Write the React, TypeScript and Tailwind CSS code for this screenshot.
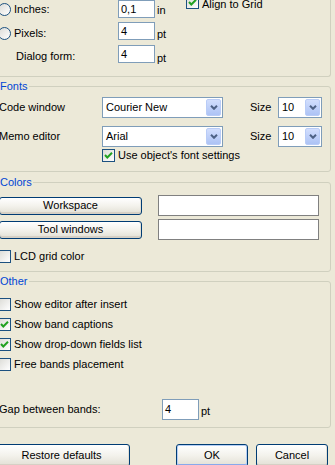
import type { ReactNode } from 'react';

function Check({ checked }: { checked?: boolean }) {
  return (
    <span className="flex h-[13px] w-[13px] shrink-0 items-center justify-center border border-[#1C5180] bg-linear-to-br from-[#DCDCD7] to-white">
      {checked && (
        <svg width="11" height="11" viewBox="0 0 11 11">
          <path d="M2 5 L4.3 7.5 L9 2.8" fill="none" stroke="#21A121" strokeWidth="2" />
        </svg>
      )}
    </span>
  );
}

function Radio() {
  return <span className="h-[13px] w-[13px] shrink-0 rounded-full border border-[#1C5180] bg-linear-to-br from-[#DCDCD7] to-white" />;
}

function Edit({ value, className }: { value: string; className: string }) {
  return (
    <div className={`flex h-[18px] shrink-0 items-center border border-[#7F9DB9] bg-white pl-[2px] leading-[14px] ${className}`}>
      {value}
    </div>
  );
}

function Combo({ value, className }: { value: string; className: string }) {
  return (
    <div className={`flex h-[21px] shrink-0 border border-[#7F9DB9] bg-white p-[1px] ${className}`}>
      <span className="flex-1 pl-[2px] leading-[17px]">{value}</span>
      <span className="flex w-[15px] items-center justify-center rounded-[2px] border border-[#B9CCF7] bg-linear-to-b from-[#D2DEFD] to-[#ADC3F5]">
        <svg width="8" height="5" viewBox="0 0 8 5">
          <path d="M1 0.8 L4 3.8 L7 0.8" fill="none" stroke="#4D6185" strokeWidth="2" />
        </svg>
      </span>
    </div>
  );
}

function Btn({ children, className, def }: { children: ReactNode; className: string; def?: boolean }) {
  return (
    <div
      className={`flex shrink-0 items-center justify-center rounded-[3px] border border-[#003C74] bg-linear-to-b from-white via-[#F3F2EC] to-[#E2DFD4] ${
        def
          ? 'shadow-[inset_0_0_0_1px_#B5CEF5,inset_0_-2px_0_#88A9EC]'
          : 'shadow-[inset_0_-2px_0_#D6D0C5,inset_-1px_0_0_#E3E0D5]'
      } ${className}`}
    >
      {children}
    </div>
  );
}

function Group({ title, className, children }: { title: string; className: string; children: ReactNode }) {
  return (
    <div className={`relative rounded-[3px] border border-[#D0D0BF] ${className}`}>
      <span className="absolute -top-[7px] left-[7px] bg-[#ECE9D8] px-[1px] leading-[13px] text-[#0046D5]">{title}</span>
      {children}
    </div>
  );
}

function CheckRow({ label, checked }: { label: string; checked?: boolean }) {
  return (
    <div className="-ml-[1px] flex h-[20px] items-center gap-[3px]">
      <Check checked={checked} />
      <span>{label}</span>
    </div>
  );
}

export default function App() {
  return (
    <div className="h-[465px] w-[335px] overflow-hidden bg-[#ECE9D8] font-['Liberation_Sans',Arial,sans-serif] text-[11px] leading-[13px] text-black">
      <div className="-ml-[9px] w-[340px]">
        {/* Grid group (cut off at the top) */}
        <div className="h-[77px] rounded-b-[3px] border border-t-0 border-[#D0D0BF]">
          <div className="flex h-[18px] items-center">
            <div className="flex w-[126px] items-center gap-[3px] pl-[6px]">
              <Radio />
              <span>Inches:</span>
            </div>
            <Edit value="0,1" className="w-[37px]" />
            <span className="mt-[3px] w-[31px] pl-[2px]">in</span>
            <div className="-mt-[4px] flex items-start gap-[3px] self-start">
              <Check checked />
              <span className="mt-[2px]">Align to Grid</span>
            </div>
          </div>
          <div className="mt-[4px] flex h-[18px] items-center">
            <div className="mt-[4px] flex w-[126px] items-center gap-[3px] pl-[6px]">
              <Radio />
              <span>Pixels:</span>
            </div>
            <Edit value="4" className="w-[37px]" />
            <span className="mt-[6px] pl-[2px]">pt</span>
          </div>
          <div className="mt-[5px] flex h-[18px] items-center">
            <div className="mt-[4px] w-[126px] pl-[24px]">Dialog form:</div>
            <Edit value="4" className="w-[37px]" />
            <span className="mt-[8px] pl-[2px]">pt</span>
          </div>
        </div>

        <Group title="Fonts" className="mt-[9px] h-[86px] pl-[7px] pt-[10px]">
          <div className="flex h-[21px] items-center">
            <span className="w-[103px]">Code window</span>
            <Combo value="Courier New" className="w-[121px]" />
            <span className="ml-[27px] w-[28px]">Size</span>
            <Combo value="10" className="w-[44px]" />
          </div>
          <div className="mt-[8px] flex h-[21px] items-center">
            <span className="w-[103px]">Memo editor</span>
            <Combo value="Arial" className="w-[121px]" />
            <span className="ml-[27px] w-[28px]">Size</span>
            <Combo value="10" className="w-[44px]" />
          </div>
          <div className="mt-[2px] flex h-[13px] items-center gap-[3px] pl-[103px]">
            <Check checked />
            <span>Use object's font settings</span>
          </div>
        </Group>

        <Group title="Colors" className="mt-[10px] h-[90px] pl-[7px] pt-[12px]">
          <div className="flex h-[21px] items-center">
            <Btn className="h-[18px] w-[143px]">Workspace</Btn>
            <div className="ml-[16px] h-[21px] w-[161px] border border-[#808080] bg-white" />
          </div>
          <div className="mt-[3px] flex h-[21px] items-center">
            <Btn className="h-[18px] w-[143px]">Tool windows</Btn>
            <div className="ml-[16px] h-[21px] w-[161px] border border-[#808080] bg-white" />
          </div>
          <div className="mt-[6px]">
            <CheckRow label="LCD grid color" />
          </div>
        </Group>

        <Group title="Other" className="mt-[9px] h-[147px] pl-[7px] pt-[12px]">
          <CheckRow label="Show editor after insert" />
          <CheckRow label="Show band captions" checked />
          <CheckRow label="Show drop-down fields list" checked />
          <CheckRow label="Free bands placement" />
          <div className="mt-[25px] flex h-[21px] items-center">
            <span className="w-[163px]">Gap between bands:</span>
            <div className="flex h-[21px] w-[37px] items-center border border-[#7F9DB9] bg-white pl-[2px]">4</div>
            <span className="mt-[3px] pl-[2px]">pt</span>
          </div>
        </Group>

        <div className="mt-[16px] flex h-[23px]">
          <Btn className="ml-[2px] w-[137px]">Restore defaults</Btn>
          <Btn className="ml-[46px] w-[72px]" def>
            OK
          </Btn>
          <Btn className="ml-[8px] w-[72px]">Cancel</Btn>
        </div>
      </div>
    </div>
  );
}
